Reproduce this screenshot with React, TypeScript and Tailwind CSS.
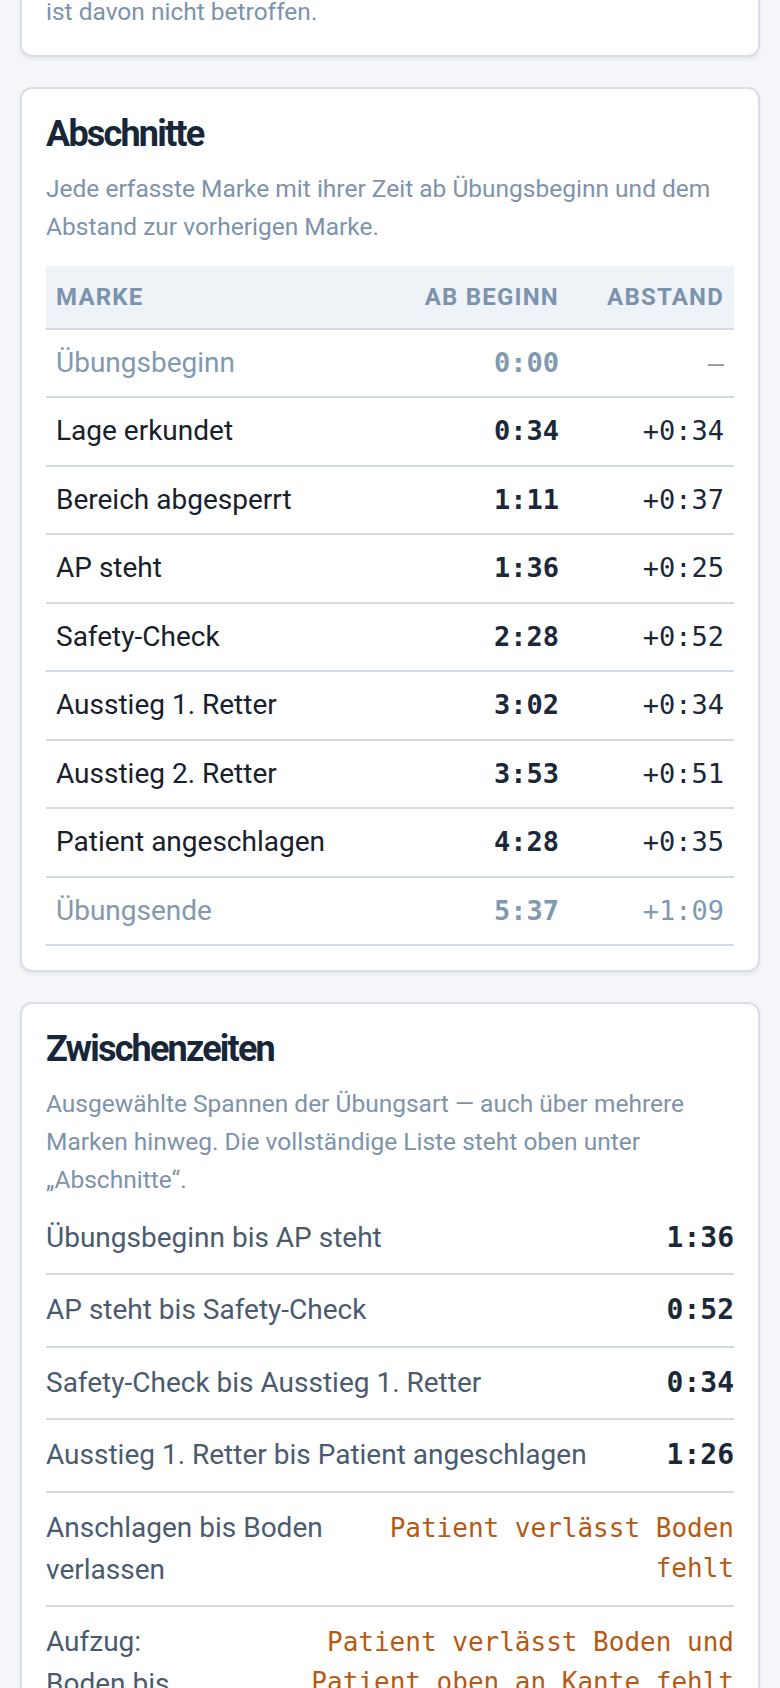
import React from "react";

type Mark = { label: string; t: string; d: string; muted?: boolean };

const marks: Mark[] = [
  { label: "Übungsbeginn", t: "0:00", d: "–", muted: true },
  { label: "Lage erkundet", t: "0:34", d: "+0:34" },
  { label: "Bereich abgesperrt", t: "1:11", d: "+0:37" },
  { label: "AP steht", t: "1:36", d: "+0:25" },
  { label: "Safety-Check", t: "2:28", d: "+0:52" },
  { label: "Ausstieg 1. Retter", t: "3:02", d: "+0:34" },
  { label: "Ausstieg 2. Retter", t: "3:53", d: "+0:51" },
  { label: "Patient angeschlagen", t: "4:28", d: "+0:35" },
  { label: "Übungsende", t: "5:37", d: "+1:09", muted: true },
];

type Split = { label: string; value: string; missing?: boolean };

const splits: Split[] = [
  { label: "Übungsbeginn bis AP steht", value: "1:36" },
  { label: "AP steht bis Safety-Check", value: "0:52" },
  { label: "Safety-Check bis Ausstieg 1. Retter", value: "0:34" },
  { label: "Ausstieg 1. Retter bis Patient angeschlagen", value: "1:26" },
  { label: "Anschlagen bis Boden verlassen", value: "Patient verlässt Boden fehlt", missing: true },
  { label: "Aufzug: Boden bis Kante", value: "Patient verlässt Boden und Patient oben an Kante fehlt", missing: true },
];

function Card({ children, className = "" }: { children: React.ReactNode; className?: string }) {
  return (
    <section
      className={
        "rounded-[12px] border-2 border-[#d9dee6] bg-white p-[24px] shadow-[0_2px_4px_rgba(15,23,42,0.07)] " +
        className
      }
    >
      {children}
    </section>
  );
}

export default function App() {
  return (
    <div className="min-h-screen bg-[#f4f6f9] font-['Roboto',sans-serif] overflow-hidden">
      <div className="flex flex-col gap-[30px] px-[20px] pb-[40px]">
        <Card className="-mt-[33px]">
          <p className="text-[24.5px] leading-[38px] text-[#7d93ab]">ist davon nicht betroffen.</p>
        </Card>

        <Card>
          <h2 className="text-[36px] font-bold leading-[42.5px] tracking-tighter text-[#18263a]">Abschnitte</h2>
          <p className="mt-[14px] text-[24.5px] leading-[38px] text-[#7d93ab]">
            Jede erfasste Marke mit ihrer Zeit ab Übungsbeginn und dem Abstand zur vorherigen Marke.
          </p>
          <div className="mt-[20px]">
            <div className="grid h-[64px] grid-cols-[1fr_175px_165px] items-center whitespace-nowrap border-b-2 border-[#d3d9e1] bg-[#eff3f8] text-[24px] font-bold uppercase tracking-wider text-[#7b93ad]">
              <div className="px-[10px]">Marke</div>
              <div className="px-[10px] text-right">Ab Beginn</div>
              <div className="px-[10px] text-right">Abstand</div>
            </div>
            {marks.map((m) => (
              <div
                key={m.label}
                className="grid grid-cols-[1fr_175px_165px] items-baseline border-b-2 border-[#d3d9e1] py-[12px] leading-[42.5px]"
              >
                <div className={"px-[10px] text-[28px] " + (m.muted ? "text-[#8199b1]" : "text-[#17202c]")}>
                  {m.label}
                </div>
                <div
                  className={
                    "px-[10px] text-right font-['DejaVu_Sans_Mono',monospace] text-[27px] font-bold " +
                    (m.muted ? "text-[#8199b1]" : "text-[#1b2838]")
                  }
                >
                  {m.t}
                </div>
                <div
                  className={
                    "px-[10px] text-right font-['DejaVu_Sans_Mono',monospace] text-[27px] " +
                    (m.muted ? "text-[#8199b1]" : "text-[#1b2838]")
                  }
                >
                  {m.d}
                </div>
              </div>
            ))}
          </div>
        </Card>

        <Card>
          <h2 className="text-[36px] font-bold leading-[42.5px] tracking-tighter text-[#18263a]">Zwischenzeiten</h2>
          <p className="mt-[14px] text-[24.5px] leading-[38px] text-[#7d93ab]">
            Ausgewählte Spannen der Übungsart — auch über mehrere Marken hinweg. Die vollständige Liste steht oben
            unter „Abschnitte“.
          </p>
          <div className="mt-[4px]">
            {splits.map((s) => (
              <div
                key={s.label}
                className="flex items-baseline justify-between gap-4 border-b-2 border-[#d3d9e1] py-[14.25px]"
              >
                <div className="text-[28px] leading-[42px] text-[#4a5b70]">{s.label}</div>
                {s.missing ? (
                  <div className="text-right font-['DejaVu_Sans_Mono',monospace] text-[26px] leading-[40px] text-[#b55a14]">
                    {s.value}
                  </div>
                ) : (
                  <div className="text-right font-['DejaVu_Sans_Mono',monospace] text-[28px] font-bold leading-[42px] text-[#1b2838]">
                    {s.value}
                  </div>
                )}
              </div>
            ))}
          </div>
        </Card>
      </div>
    </div>
  );
}
